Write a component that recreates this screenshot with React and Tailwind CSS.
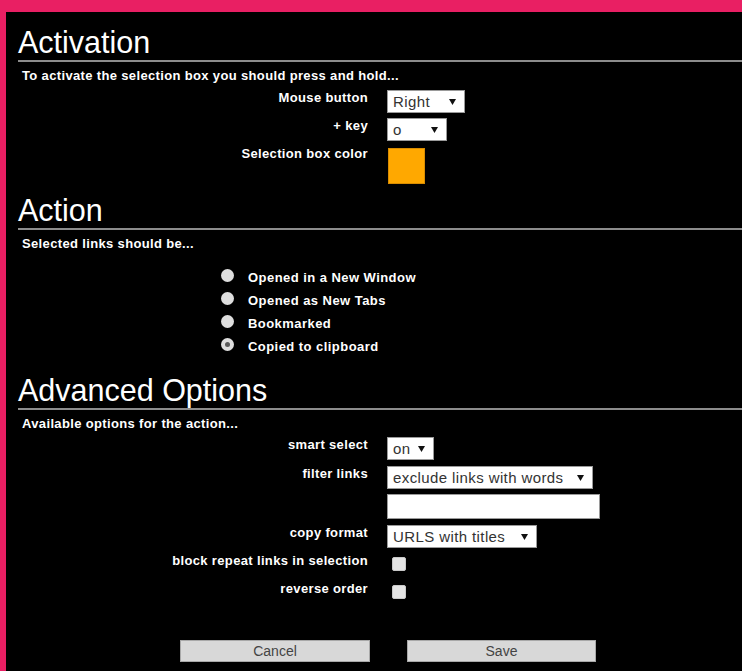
const Caret = () => (
  <svg width="7" height="6" viewBox="0 0 7 6" className="shrink-0">
    <path d="M0 0h7L3.5 6z" fill="#111" />
  </svg>
)

function Select({ value, className }) {
  return (
    <div className={`h-[23px] bg-white border border-[#9a9a9a] flex items-center justify-between pl-[5px] pr-[8px] text-[15px] leading-none tracking-[0.4px] text-[#333] font-normal ${className}`}>
      <span>{value}</span>
      <Caret />
    </div>
  )
}

function Row({ label, className = '', children }) {
  return (
    <div className={`flex items-start ${className}`}>
      <div className="w-[350px] text-right text-[13px] font-bold leading-[16px] tracking-[0.35px]">{label}</div>
      <div className="ml-[19px]">{children}</div>
    </div>
  )
}

function Heading({ children, className = '' }) {
  return (
    <h2 className={`text-[30.5px] leading-[29px] font-normal pb-[3px] border-b-2 border-[#8c8c8c] ${className}`}>
      {children}
    </h2>
  )
}

function Desc({ children }) {
  return <p className="mt-[6px] pl-[4px] text-[13px] font-bold leading-[16px] tracking-[0.35px]">{children}</p>
}

function Radio({ label, checked }) {
  return (
    <div className="h-[23px] flex items-start">
      <div className="mt-[3px] w-[13px] h-[13px] rounded-full bg-[#dedede] flex items-center justify-center">
        {checked && <div className="w-[5px] h-[5px] rounded-full bg-[#5a5a5a]" />}
      </div>
      <span className="ml-[14px] text-[13px] font-bold leading-[23px] tracking-[0.45px]">{label}</span>
    </div>
  )
}

const Checkbox = () => (
  <div className="ml-[5px] mt-[4px] w-[14px] h-[14px] rounded-[2px] bg-[#e4e4e4] border border-[#c8c8c8]" />
)

export default function App() {
  return (
    <div className="min-h-[671px] bg-[#e91f63] pt-[12px] pl-[6px] font-['Liberation_Sans',Arial,sans-serif]">
      <div className="min-h-[659px] bg-black text-white pl-[12px] pt-[16px]">
        <Heading>Activation</Heading>
        <Desc>To activate the selection box you should press and hold...</Desc>
        <div className="mt-[6px] flex flex-col gap-[5px]">
          <Row label="Mouse button">
            <Select value="Right" className="w-[78px]" />
          </Row>
          <Row label="+ key">
            <Select value="o" className="w-[60px]" />
          </Row>
          <Row label="Selection box color">
            <div className="ml-px mt-[2px] w-[37px] h-[36px] bg-[#ffa800] border border-[#d98c00]" />
          </Row>
        </div>

        <Heading className="mt-[12px]">Action</Heading>
        <Desc>Selected links should be...</Desc>
        <div className="mt-[14px] ml-[203px]">
          <Radio label="Opened in a New Window" />
          <Radio label="Opened as New Tabs" />
          <Radio label="Bookmarked" />
          <Radio label="Copied to clipboard" checked />
        </div>

        <Heading className="mt-[18px]">Advanced Options</Heading>
        <Desc>Available options for the action...</Desc>
        <Row label="smart select" className="mt-[5px]">
          <Select value="on" className="w-[47px]" />
        </Row>
        <Row label="filter links" className="mt-[6px]">
          <Select value="exclude links with words" className="w-[206px]" />
        </Row>
        <Row label="" className="mt-[5px]">
          <div className="w-[213px] h-[25px] bg-white border border-[#9a9a9a]" />
        </Row>
        <Row label="copy format" className="mt-[6px]">
          <Select value="URLS with titles" className="w-[150px]" />
        </Row>
        <Row label="block repeat links in selection" className="mt-[5px] h-[23px]">
          <Checkbox />
        </Row>
        <Row label="reverse order" className="mt-[5px] h-[23px]">
          <Checkbox />
        </Row>

        <div className="mt-[36px] pl-[162px] flex gap-[37px]">
          <button className="w-[190px] h-[22px] bg-[#d8d8d8] border border-[#a8a8a8] text-[14px] text-[#444]">Cancel</button>
          <button className="w-[189px] h-[22px] bg-[#d8d8d8] border border-[#a8a8a8] text-[14px] text-[#444]">Save</button>
        </div>
      </div>
    </div>
  )
}
